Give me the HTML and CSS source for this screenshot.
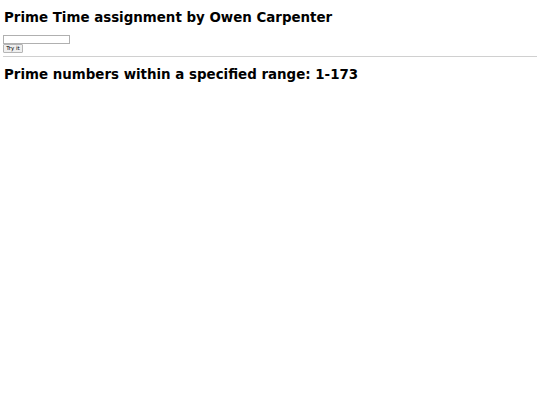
FILE: index.html
```html
<!DOCTYPE html>
<html>
<head>
<meta charset="utf-8">
<link rel="stylesheet" href="styles.css">
</head>
<body>
<h1 class="title">Prime Time assignment by Owen Carpenter</h1>
<form class="form">
<input class="num" type="text">
<button class="btn" type="button">Try it</button>
</form>
<hr class="rule">
<h1 class="title title-second">Prime numbers within a specified range: 1-173</h1>
</body>
</html>
```
FILE: styles.css
```css
html, body { background: #fff; }
body {
  margin: 3px;
  font-family: "DejaVu Sans", Verdana, sans-serif;
  color: #000;
}
.title {
  font-size: 13.4px;
  line-height: 16px;
  font-weight: bold;
  margin: 6.5px 0 9.5px 1px;
}
.title-second {
  margin-top: 10px;
}
.form {
  display: flex;
  flex-direction: column;
  align-items: flex-start;
  margin: 0;
}
.num {
  box-sizing: border-box;
  width: 67px;
  height: 9px;
  padding: 0 1px;
  border: 1px solid #b0b0b0;
  border-radius: 0;
  margin: 0;
  font-size: 6px;
  background: #fff;
}
.btn {
  box-sizing: border-box;
  font-family: "DejaVu Sans", sans-serif;
  font-size: 5.5px;
  width: 20px;
  height: 9px;
  padding: 0;
  margin: 0;
  border: 1px solid #b5b5b5;
  border-radius: 1px;
  background: #efefef;
  color: #000;
  line-height: 7px;
}
.rule {
  border: 0;
  border-top: 1px solid #d0d0d0;
  height: 0;
  margin: 3px 0 0 0;
}
```
